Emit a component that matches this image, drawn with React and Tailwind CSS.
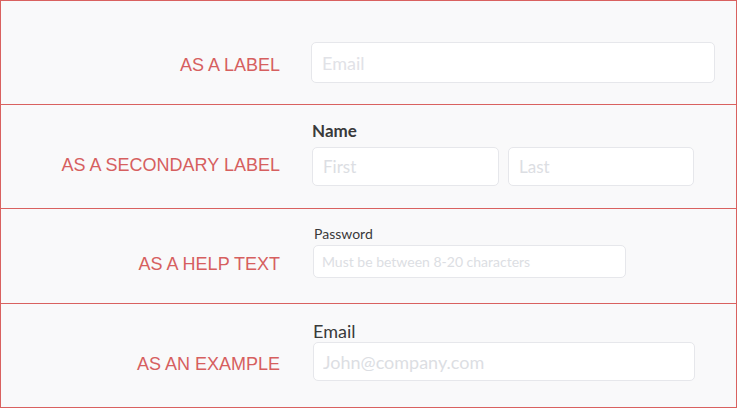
import React from "react";

const inputBase =
  "block bg-white border border-[#e6e7eb] rounded-[5px] outline-none text-[#333] placeholder:text-[#dcdee3]";

const RowLabel = ({ text, className }) => {
  return (
    <span
      className={`col-start-1 row-start-2 self-center text-right text-[18px] leading-[18px] text-[#d65f5f] ${className}`}
      style={{ fontFamily: '"Liberation Sans", Arial, sans-serif' }}
    >
      {text}
    </span>
  );
};

const App = () => {
  return (
    <div
      className="w-[737px] h-[408px] bg-[#f9f9fa] border border-[#d9615f]"
      style={{ fontFamily: "Lato, 'Open Sans', sans-serif" }}
    >
      {/* as a label */}
      <div className="grid grid-cols-[279px_1fr] gap-x-[31px] pt-[41px] pb-[21px] border-b border-[#d9615f]">
        <RowLabel text="AS A LABEL" className="pt-[4px]" />
        <input
          className={`${inputBase} col-start-2 row-start-2 w-[404px] h-[41px] px-[10px] text-[18px] placeholder:text-[#e1e2e7]`}
          placeholder="Email"
        />
      </div>

      {/* as a secondary label */}
      <div className="grid grid-cols-[279px_1fr] gap-x-[32px] pt-[16px] pb-[22px] border-b border-[#d9615f]">
        <p className="col-start-2 row-start-1 text-[17px] leading-[20px] font-bold text-[#3a3a3a] mb-[6px]">
          Name
        </p>
        <RowLabel text="AS A SECONDARY LABEL" className="pb-[4px]" />
        <div className="col-start-2 row-start-2 flex gap-[9px]">
          <input
            className={`${inputBase} w-[187px] h-[39px] px-[10px] text-[17px]`}
            placeholder="First"
          />
          <input
            className={`${inputBase} w-[186px] h-[39px] px-[10px] text-[17px]`}
            placeholder="Last"
          />
        </div>
      </div>

      {/* as a help text */}
      <div className="grid grid-cols-[279px_1fr] gap-x-[33px] pt-[16px] pb-[25px] border-b border-[#d9615f]">
        <p className="col-start-2 row-start-1 text-[14px] leading-[17px] text-[#3a3a3a] ml-px mb-[3px]">
          Password
        </p>
        <RowLabel text="AS A HELP TEXT" className="pt-[4px]" />
        <input
          className={`${inputBase} col-start-2 row-start-2 w-[313px] h-[33px] px-[8px] text-[14px]`}
          placeholder="Must be between 8-20 characters"
        />
      </div>

      {/* as an example */}
      <div className="grid grid-cols-[279px_1fr] gap-x-[33px] pt-[16px] pb-[25px]">
        <p className="col-start-2 row-start-1 text-[18px] leading-[22px] text-[#3a3a3a]">
          Email
        </p>
        <RowLabel text="AS AN EXAMPLE" className="pt-[4px]" />
        <input
          className={`${inputBase} col-start-2 row-start-2 w-[382px] h-[39px] px-[9px] text-[18px]`}
          placeholder="John@company.com"
        />
      </div>
    </div>
  );
};

export default App;
